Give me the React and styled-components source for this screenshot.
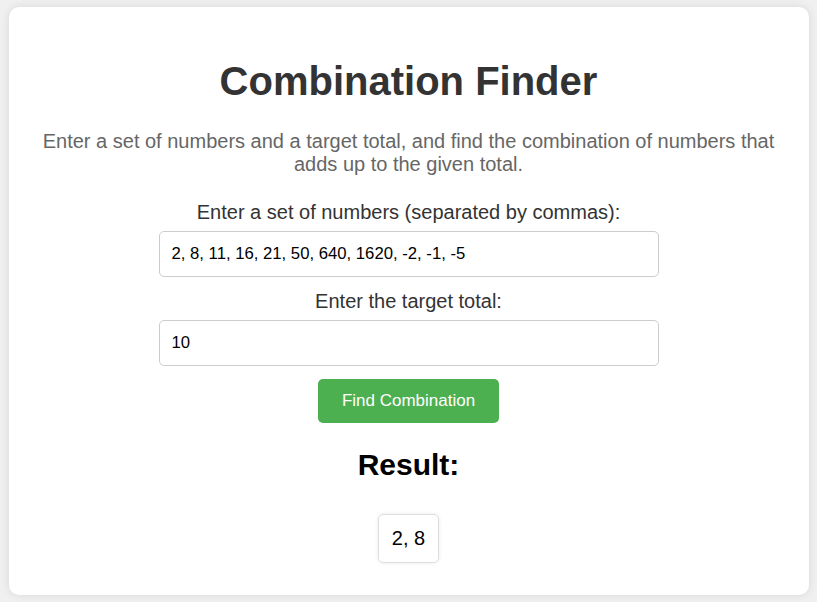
import React, { useState } from 'react';
import styled, { createGlobalStyle } from 'styled-components';

const GlobalStyle = createGlobalStyle`
  body {
    margin: 0;
    padding: 7px 0;
    background-color: #f0f0f0;
    font-family: "Liberation Sans", Arial, sans-serif;
  }
`;

const findCombination = (numbers, target) => {
  const result = [];
  const search = (start, sum, picked) => {
    if (result.length) return;
    if (picked.length && sum === target) {
      result.push(...picked);
      return;
    }
    for (let i = start; i < numbers.length; i++) {
      search(i + 1, sum + numbers[i], [...picked, numbers[i]]);
      if (result.length) return;
    }
  };
  search(0, 0, []);
  return result;
};

const App = () => {
  const [numbers, setNumbers] = useState('2, 8, 11, 16, 21, 50, 640, 1620, -2, -1, -5');
  const [target, setTarget] = useState('10');
  const [result, setResult] = useState([2, 8]);

  const handleFind = () => {
    const list = numbers
      .split(',')
      .map((n) => parseFloat(n.trim()))
      .filter((n) => !isNaN(n));
    setResult(findCombination(list, parseFloat(target)));
  };

  return (
    <>
      <GlobalStyle />
      <Card>
        <Title>Combination Finder</Title>
        <Description>
          Enter a set of numbers and a target total, and find the combination of numbers that adds up
          to the given total.
        </Description>
        <Label htmlFor="numbers">Enter a set of numbers (separated by commas):</Label>
        <Input id="numbers" value={numbers} onChange={(e) => setNumbers(e.target.value)} />
        <Label htmlFor="target">Enter the target total:</Label>
        <Input id="target" value={target} onChange={(e) => setTarget(e.target.value)} />
        <Button onClick={handleFind}>Find Combination</Button>
        <ResultTitle>Result:</ResultTitle>
        <ResultBox>{result.length ? result.join(', ') : 'No combination found'}</ResultBox>
      </Card>
    </>
  );
};

const Card = styled.div`
  width: 800px;
  box-sizing: border-box;
  margin: 0 auto;
  padding: 20px 20px 32px;
  background-color: #ffffff;
  border-radius: 10px;
  box-shadow: 0 0 10px rgba(0, 0, 0, 0.1);
  display: flex;
  flex-direction: column;
  align-items: center;
  text-align: center;
`;

const Title = styled.h1`
  font-size: 40px;
  color: #333333;
  margin: 31px 0 0;
  line-height: 46px;
`;

const Description = styled.p`
  font-size: 20px;
  line-height: 23px;
  color: #666666;
  margin: 26px 0 25px;
`;

const Label = styled.label`
  font-size: 20px;
  line-height: 23px;
  color: #333333;
  margin-bottom: 7px;
`;

const Input = styled.input`
  width: 500px;
  height: 46px;
  box-sizing: border-box;
  padding: 0 12px;
  margin-bottom: 13px;
  border: 1px solid #cccccc;
  border-radius: 5px;
  font-family: "Liberation Sans", Arial, sans-serif;
  font-size: 16.7px;
  color: #000000;
  outline: none;
`;

const Button = styled.button`
  background-color: #4caf50;
  color: #ffffff;
  border: none;
  border-radius: 5px;
  height: 44px;
  padding: 0 24px;
  font-family: "Liberation Sans", Arial, sans-serif;
  font-size: 17px;
  cursor: pointer;

  &:hover {
    background-color: #45a049;
  }
`;

const ResultTitle = styled.h2`
  font-size: 30px;
  line-height: 34px;
  color: #000000;
  margin: 25px 0 0;
`;

const ResultBox = styled.div`
  margin-top: 32px;
  padding: 0 13px;
  height: 49px;
  box-sizing: border-box;
  display: flex;
  align-items: center;
  border: 1px solid #dddddd;
  border-radius: 5px;
  box-shadow: 0 0 4px rgba(0, 0, 0, 0.08);
  font-size: 20px;
  color: #000000;
`;

export default App;
